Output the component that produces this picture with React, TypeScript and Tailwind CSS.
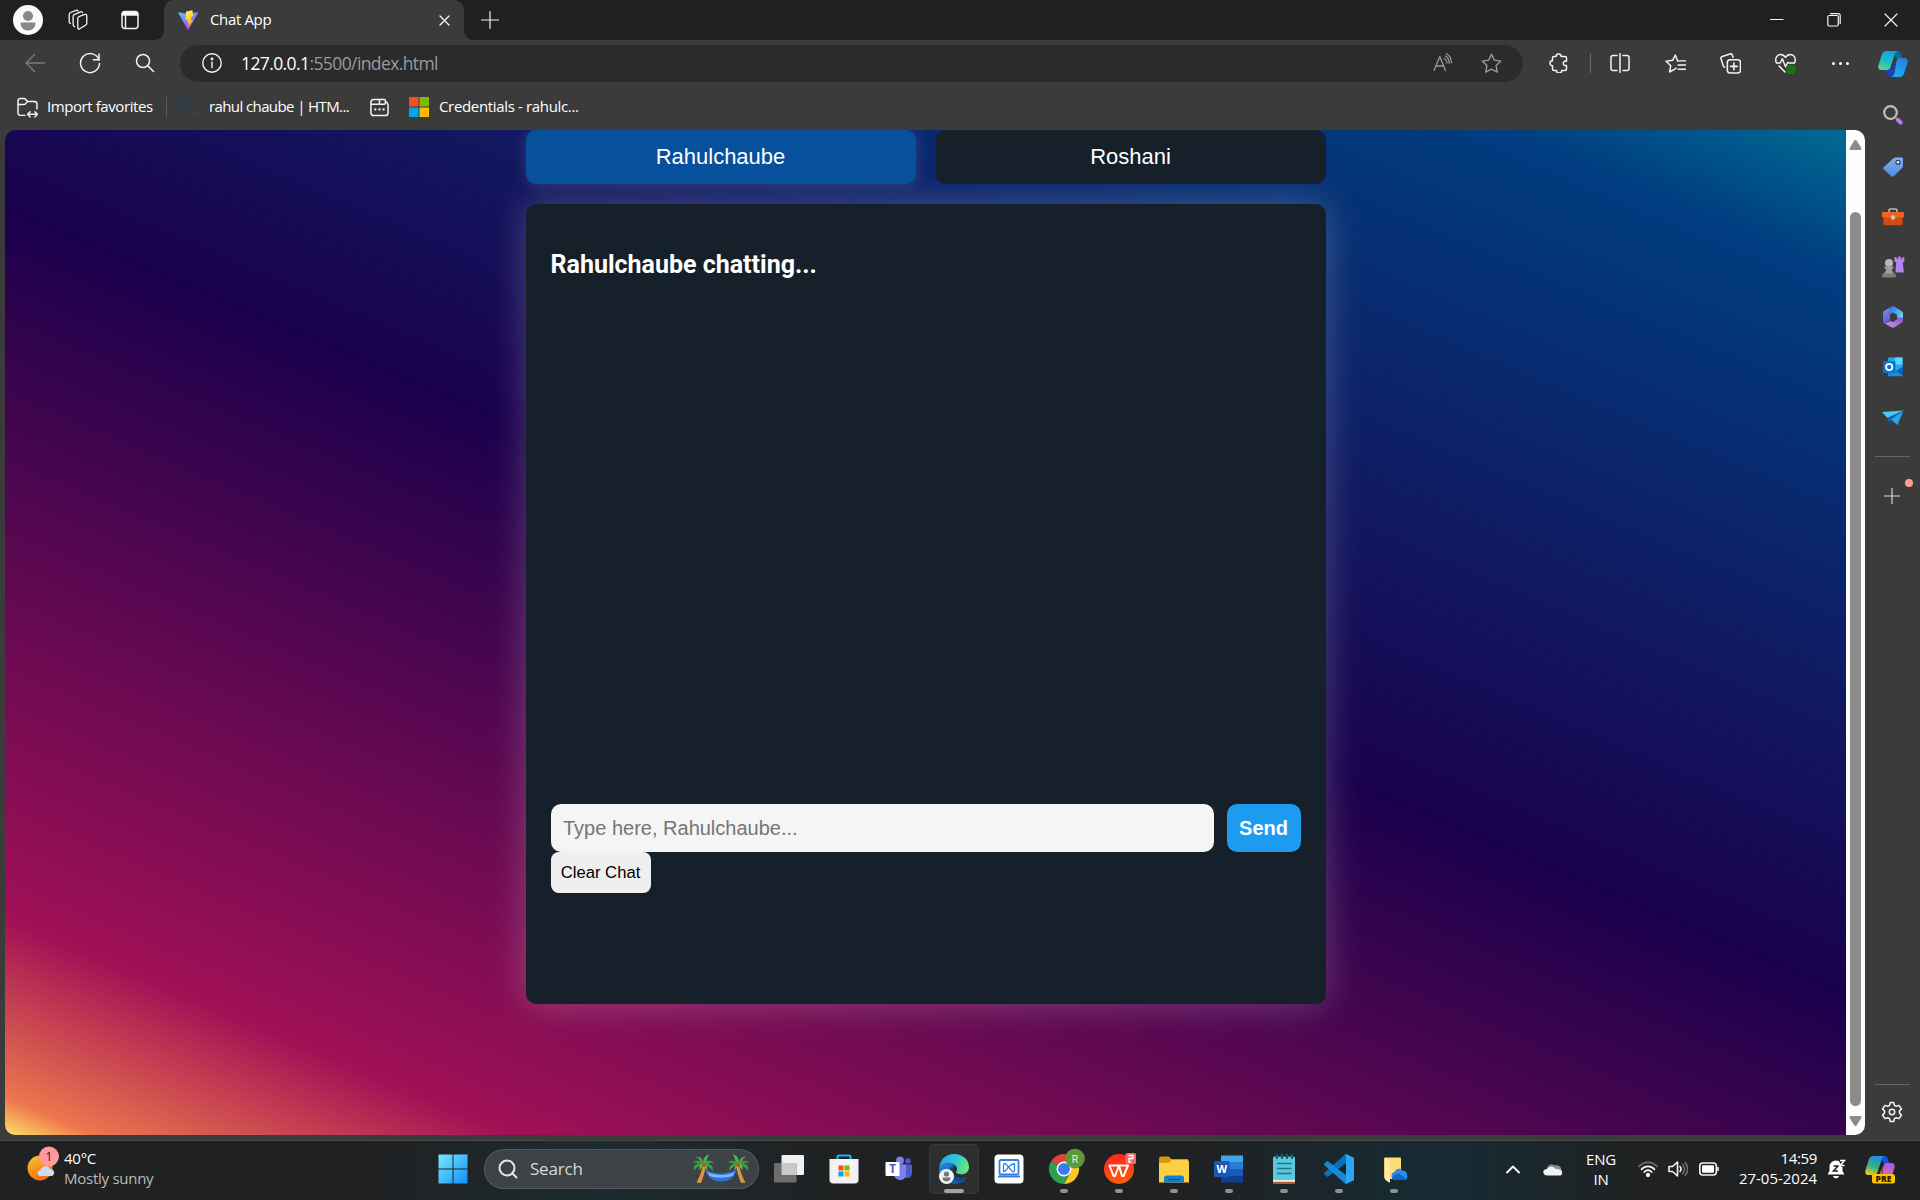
import type { ReactNode } from "react";
import clsx from "clsx";

type SlotProps = { className?: string; children?: ReactNode };

function Slot({ className, children }: SlotProps) {
  return (
    <div className={clsx("flex shrink-0 items-center justify-center", className)}>
      {children}
    </div>
  );
}

type IconProps = { size?: number; box?: number; color?: string; width?: number; children: ReactNode };

// Thin outline icon used all over the browser chrome
function Line({ size = 20, box = 20, color = "#f3f3f3", width = 1.3, children }: IconProps) {
  return (
    <svg
      width={size}
      height={size}
      viewBox={`0 0 ${box} ${box}`}
      fill="none"
      stroke={color}
      strokeWidth={width}
      strokeLinecap="round"
      strokeLinejoin="round"
    >
      {children}
    </svg>
  );
}

function Pic({ size = 30, box = 30, children }: IconProps) {
  return (
    <svg width={size} height={size} viewBox={`0 0 ${box} ${box}`} className="overflow-visible">
      {children}
    </svg>
  );
}

function CopilotLogo({ pre = false }: { pre?: boolean }) {
  return (
    <Pic>
      <defs>
        <linearGradient id={pre ? "cpA2" : "cpA1"} x1="0.6" y1="0" x2="0.2" y2="1">
          <stop offset="0" stopColor={pre ? "#1b8fe8" : "#0aa4e0"} />
          <stop offset="0.55" stopColor={pre ? "#35b07c" : "#24bcc2"} />
          <stop offset="1" stopColor={pre ? "#f0d022" : "#57d98c"} />
        </linearGradient>
        <linearGradient id={pre ? "cpB2" : "cpB1"} x1="0.7" y1="0" x2="0.3" y2="1">
          <stop offset="0" stopColor={pre ? "#a05cf0" : "#2a7de0"} />
          <stop offset="1" stopColor={pre ? "#ff6f7d" : "#13b5f5"} />
        </linearGradient>
      </defs>
      <path d="M13 2h6.500c2 0 2.800 1.300 3.300 3l1.200 4h-5z" fill={pre ? "#1c4fd8" : "#0a6f9f"} />
      <path d="M7 21h7l4-9-3 15.500h-2.500c-2 0-3-1.500-3.500-3z" fill={pre ? "#f2663c" : "#1b3fd0"} />
      <path d="M8.500 2H20c-2 .3-2.800 1.600-3.400 3.500L12.600 18c-.7 2-1.700 3-3.800 3H3.500C.8 21-.2 19 .4 16.500L3.800 5.500C4.600 3.200 6 2 8.500 2z" fill={`url(#${pre ? "cpA2" : "cpA1"})`} />
      <path d="M21 9h5.500c2.700 0 3.700 2 3.100 4.500l-3.400 10.800c-.8 2.400-2.200 3.700-4.700 3.700H13c2-.3 2.800-1.600 3.400-3.500l2-12C18.900 10 19.500 9 21 9z" fill={`url(#${pre ? "cpB2" : "cpB1"})`} />
      {pre && (
        <g>
          <rect x="7" y="20" width="23" height="9.500" rx="2.500" fill="#ffc400" />
          <text x="18.500" y="28" textAnchor="middle" fontSize="8.500" fontWeight="800" fontFamily="Open Sans, sans-serif" fill="#241c00">
            PRE
          </text>
        </g>
      )}
    </Pic>
  );
}

function MicrosoftLogo({ size = 20 }: { size?: number }) {
  return (
    <Pic size={size} box={20}>
      <rect width="9.500" height="9.500" fill="#f25022" />
      <rect x="10.500" width="9.500" height="9.500" fill="#7fba00" />
      <rect y="10.500" width="9.500" height="9.500" fill="#00a4ef" />
      <rect x="10.500" y="10.500" width="9.500" height="9.500" fill="#ffb900" />
    </Pic>
  );
}

function TitleBar() {
  return (
    <div className="flex h-10 shrink-0 items-center bg-[#202020]">
      <Slot className="w-14">
        <Pic size={30}>
          <circle cx="15" cy="15" r="15" fill="#fafafa" />
          <circle cx="15" cy="11" r="5" fill="#8a8684" />
          <path d="M7.500 17.500h15c0 5-3 8-7.500 8s-7.500-3-7.500-8z" fill="#8a8684" />
        </Pic>
      </Slot>
      <Slot className="w-11">
        <Line size={22} box={22}>
          <path d="M12.500 7.300l5.300-2c1-.3 2 .3 2 1.400v7.500c0 1-.5 1.700-1.400 2l-5.700 3.600c-1 .5-1.900 0-1.900-1.100V9.200c0-1 .6-1.600 1.700-1.900z" />
          <path d="M7.500 17.500c-.9-.2-1.400-.8-1.400-1.700V7.500c0-1 .6-1.700 1.600-2.100L13.500 2.800c1-.4 1.800 0 2 .9" />
          <path d="M3.500 14.500c-.9-.3-1.300-.9-1.300-1.700V5.600c0-1 .5-1.700 1.400-2.100L9 1.300c.9-.3 1.600-.1 2 .5" />
        </Line>
      </Slot>
      <Slot className="w-[60px]">
        <Line size={20} width={1.5}>
          <rect x="2" y="1.500" width="16" height="17" rx="3" />
          <path d="M2.500 5V4.500C2.500 3 3.300 2 4.700 2h10.600c1.400 0 2.200 1 2.200 2.500V5z" fill="#fff" />
          <path d="M5.500 6v12" />
        </Line>
      </Slot>
      <div className="h-10 w-1 shrink-0 self-end" />
      <div className="relative flex h-10 w-[300px] shrink-0 items-center rounded-t-[10px] bg-[#3b3b3b]">
        {/* Concave feet of the active tab */}
        <svg width="10" height="10" className="absolute bottom-0 -left-[10px]">
          <path d="M10 0v10H0C6 10 10 6 10 0z" fill="#3b3b3b" />
        </svg>
        <svg width="10" height="10" className="absolute -right-[10px] bottom-0">
          <path d="M0 0v10h10C4 10 0 6 0 0z" fill="#3b3b3b" />
        </svg>
        <Slot className="ml-3.5 w-5">
          <Pic size={20} box={20}>
            <defs>
              <linearGradient id="viteBody" x1="0" y1="0" x2="0.6" y2="1">
                <stop offset="0" stopColor="#41d1ff" />
                <stop offset="1" stopColor="#bd34fe" />
              </linearGradient>
              <linearGradient id="viteBolt" x1="0.4" y1="0" x2="0.6" y2="1">
                <stop offset="0" stopColor="#ffea83" />
                <stop offset="0.3" stopColor="#ffdd35" />
                <stop offset="1" stopColor="#ffa800" />
              </linearGradient>
            </defs>
            <path d="M0 2.300l8 1.300 11.800-1.300c.3 0 .5.300.3.600L10.400 19.700c-.2.300-.6.300-.8 0z" fill="url(#viteBody)" />
            <path d="M14.500.2L8 1.500l-.6 8.500 2.500-.5-.5 4 1.500-.4-.8 4.700L15 9.700l-2.300.4.900-3.600 1.500-.3z" fill="url(#viteBolt)" />
          </Pic>
        </Slot>
        <span className="ml-3 pb-0.5 text-[15px] tracking-[-0.35px] text-white">Chat App</span>
        <Slot className="mr-2.5 ml-auto w-5">
          <Line size={11} box={11} width={1.4}>
            <path d="M1 1l9 9M10 1l-9 9" />
          </Line>
        </Slot>
      </div>
      <Slot className="w-[52px]">
        <Line size={18} box={18} width={1.2}>
          <path d="M9 .5v17M.5 9h17" />
        </Line>
      </Slot>
      <Slot className="ml-auto w-[57px]">
        <Line size={14} box={14} width={1.2}>
          <path d="M.5 6.500h12.500" />
        </Line>
      </Slot>
      <Slot className="w-[57px]">
        <Line size={14} box={14} width={1.2}>
          <rect x=".8" y="2.500" width="10.500" height="10.500" rx="1.500" />
          <path d="M3.500.7h7.700c1.200 0 2 .8 2 2v7.800" />
        </Line>
      </Slot>
      <Slot className="w-[58px]">
        <Line size={14} box={14} width={1.2}>
          <path d="M1 1l12 12M13 1L1 13" />
        </Line>
      </Slot>
    </div>
  );
}

function Toolbar() {
  return (
    <div className="flex h-12 shrink-0 items-center pb-0.5">
      <Slot className="w-[62px] pl-2">
        <Line size={20} color="#7c7c7c" width={1.4}>
          <path d="M19.500 10H1M9.500 1.500L1 10l8.500 8.500" />
        </Line>
      </Slot>
      <Slot className="w-14">
        <Line size={22} box={22} width={1.5}>
          <path d="M20 8A9.500 9.500 0 1 0 20.500 11.500" />
          <path d="M20 2v5.700h-5.700" />
        </Line>
      </Slot>
      <Slot className="w-[54px]">
        <Line size={20} width={1.5}>
          <circle cx="8" cy="8" r="6.500" />
          <path d="M13 13l5.500 5.500" />
        </Line>
      </Slot>
      <div className="ml-2 flex h-[37px] w-[1343px] shrink-0 items-center rounded-full bg-[#2b2b2b]">
        <Slot className="ml-5 w-6">
          <Line size={20} width={1.4}>
            <circle cx="10" cy="10" r="9.200" />
            <path d="M10 9v5.500" />
            <circle cx="10" cy="5.900" r=".7" fill="#f3f3f3" />
          </Line>
        </Slot>
        <span className="ml-[17px] text-[17.500px] tracking-[-0.600px] text-white">
          127.0.0.1<span className="text-[#9a9a9a]">:5500/index.html</span>
        </span>
        <Slot className="ml-auto w-[49px]">
          <Line size={20} color="#9a9a9a">
            <path d="M1 17.500L6.800 3.500l5.700 14M3 13h7.500" />
            <path d="M11.500 5.500c1.700 1 2.400 2.600 2.400 4.500M12.500 3c2.600 1.500 3.700 3.800 3.600 7M13.500.8c3.500 2 5 5 4.800 9" />
          </Line>
        </Slot>
        <Slot className="mr-[7px] w-[49px]">
          <Line size={21} color="#9a9a9a">
            <path d="M10 1.200l2.700 5.600 6.200.9-4.500 4.300 1.100 6.200L10 15.300l-5.500 2.900 1.100-6.200L1.100 7.700l6.200-.9z" />
          </Line>
        </Slot>
      </div>
      <Slot className="w-[72px]">
        <Line size={20} width={1.5}>
          <path d="M7 3.500a2.600 2.600 0 0 1 5.200 0H16c.9 0 1.500.6 1.500 1.500v3.200h-1a2.200 2.200 0 0 0 0 4.400h1V16c0 .9-.6 1.500-1.500 1.500h-3.300a2.600 2.600 0 0 1-5.200 0H5c-.9 0-1.500-.6-1.500-1.500v-3.200a2.500 2.500 0 0 1 0-5V5c0-.9.6-1.500 1.500-1.500z" />
        </Line>
      </Slot>
      <div className="-ml-[5px] h-5 w-px shrink-0 bg-[#6a6a6a]" />
      <Slot className="ml-0.5 w-[54px]">
        <Line size={20} width={1.5}>
          <path d="M7 2.500H3C1.800 2.500 1 3.300 1 4.500v11c0 1.200.8 2 2 2h4M13 2.500h4c1.200 0 2 .8 2 2v11c0 1.200-.8 2-2 2h-4M10 .7v18.600" />
        </Line>
      </Slot>
      <Slot className="w-[56px]">
        <Line size={21} width={1.4}>
          <path d="M12 7.500L9.800 2 7.300 7 1 7.800l4.500 4.300-1.200 6 4.700-2.600 1.500-1" />
          <path d="M12 7.500h7.500M12.500 11.500h7M12.500 15.500h7" />
        </Line>
      </Slot>
      <Slot className="w-[55px]">
        <Line size={21} width={1.5}>
          <rect x="7" y="6.500" width="12.500" height="12.500" rx="2.500" />
          <path d="M13.250 9.500v6.500M10 12.750h6.500" />
          <path d="M4.500 13.500c-.8-.2-1.300-.8-1.500-1.500L1 5.600c-.3-1 .2-2 1.200-2.300L9.500 1c1-.3 2 .2 2.300 1.200l.6 1.800" />
        </Line>
      </Slot>
      <Slot className="w-[55px]">
        <Line size={21} width={1.4}>
          <path d="M1.200 9C-.2 5.500 1.500 1.800 5 1.500c2-.1 3.700.8 5 2.700 1.300-1.900 3-2.800 5-2.700 3.500.3 5.200 4 3.800 7.500" />
          <path d="M1.500 9.500H5l2-4 3 7.500 2.200-4 1.300.5h5M4 12.500l5.500 5.500" />
          <circle cx="15.300" cy="15.800" r="4" fill="#107c10" stroke="#107c10" />
          <path d="M13.500 16l1.300 1.200 2.200-2.500" stroke="#2b5b2b" strokeWidth="1" />
        </Line>
      </Slot>
      <Slot className="w-[55px] gap-[4px]">
        <span className="size-[3px] rounded-full bg-white" />
        <span className="size-[3px] rounded-full bg-white" />
        <span className="size-[3px] rounded-full bg-white" />
      </Slot>
    </div>
  );
}

function BookmarksBar() {
  return (
    <div className="flex h-[42px] shrink-0 items-center pb-1 text-[15px] text-white">
      <Slot className="ml-[17px] w-[21px]">
        <Line size={21} width={1.4}>
          <path d="M7.500 17.500H3.500C2 17.500 1 16.600 1 15.200V3.600C1 2.300 2 1.500 3.300 1.500h3.200c.8 0 1.300.3 1.800.9L10 4.200h6.500c1.500 0 2.500.9 2.500 2.300v5" />
          <path d="M1 7.200h5.500c.9 0 1.300-.3 1.800-.9L10 4.200M10.500 16.500h8.700M12.500 14l-2.500 2.500 2.500 2.500M17 14l2.500 2.500L17 19" />
        </Line>
      </Slot>
      <span className="ml-[9px] w-[106px] pb-px whitespace-nowrap tracking-[-0.42px]">Import favorites</span>
      <div className="ml-[13px] h-5 w-px bg-[#5c5c5c]" />
      <Slot className="ml-3 w-5">
        <Pic size={20} box={20}>
          <path d="M1 1h11M1 1v16h11V1M3 4h7" stroke="#20425a" fill="none" />
          <text x="3" y="14" fontSize="10" fontFamily="Open Sans, sans-serif" fill="#1d4b68">c</text>
          <path d="M14 17h2m2 0h1.500" stroke="#1d5c86" />
        </Pic>
      </Slot>
      <span className="ml-[10px] w-[142px] pb-px whitespace-nowrap tracking-[-0.600px]">rahul chaube | HTM...</span>
      <Slot className="ml-[18px] w-5">
        <Line size={19} width={1.6}>
          <path d="M9.500 1.500H4C2.300 1.500 1 2.700 1 4.500v11C1 17.300 2.300 18.500 4 18.500h12c1.700 0 3-1.200 3-3v-8c0-1.500-.8-2.500-2-3.500" />
          <path d="M1.500 6.500h7c1 0 1.500-.4 1.500-1.300V1.500h5c.8 0 1.200.4 1.200 1.200v2.600c0 .8-.4 1.200-1.200 1.200h-5" />
          <path d="M5.500 12h.2M9.900 12h.2M14.200 12h.2" strokeWidth="2.200" />
        </Line>
      </Slot>
      <Slot className="ml-5 w-5">
        <MicrosoftLogo />
      </Slot>
      <span className="ml-[10px] pb-px whitespace-nowrap tracking-[-0.340px]">Credentials - rahulc...</span>
    </div>
  );
}

function ChatPage() {
  return (
    <div className="flex w-[1841px] flex-col items-center overflow-hidden bg-[linear-gradient(23.1deg,#ffe066_0px,#ed764d_35px,#a01056_201px,#1b004c_847px,#003d80_1510px,#006a94_1644px)] font-['Liberation_Sans',Arial,sans-serif]">
      {/* Person selector sits above the glow of the chat card */}
      <div className="relative z-10 flex w-[800px] gap-5">
        <button className="h-[54px] flex-1 rounded-[10px] bg-[#07519c] pb-0.5 text-[22px] text-white shadow-[0_0_16px_rgba(255,255,255,0.15)]">
          Rahulchaube
        </button>
        <button className="h-[54px] flex-1 rounded-[10px] bg-[#16202a] pb-0.5 text-[22px] text-white">
          Roshani
        </button>
      </div>
      <div className="mt-5 flex h-[800px] w-[800px] flex-col rounded-[10px] bg-[#16202a] px-[25px] shadow-[0_0_38px_rgba(255,255,255,0.24)]">
        <h2 className="mt-[46px] h-[30px] font-['Roboto',sans-serif] text-[25px] leading-[30px] font-bold text-white">
          Rahulchaube chatting...
        </h2>
        <div className="mt-[524px] flex gap-[13px]">
          <input
            className="h-12 w-[663px] rounded-[10px] bg-[#f5f5f5] px-[12.500px] text-[20px] placeholder:text-[#757575]"
            placeholder="Type here, Rahulchaube..."
          />
          <button className="h-12 flex-1 rounded-[10px] bg-[#1d9bf0] text-[20px] font-bold text-white">
            Send
          </button>
        </div>
        <button className="h-[41px] w-[100px] rounded-[8px] bg-[#efefef] text-[16.670px] whitespace-nowrap text-black">
          Clear Chat
        </button>
      </div>
    </div>
  );
}

function Scrollbar() {
  return (
    <div className="flex w-[19px] flex-col items-center bg-[#fdfdfd]">
      <svg width="13" height="10" className="mt-2.5">
        <path d="M6.500 0c.6 0 1 .3 1.300.8L12.300 8c.4.800 0 2-1 2H1.700c-1 0-1.400-1.200-1-2L5.200.8C5.500.3 5.900 0 6.500 0z" fill="#8b8b8b" />
      </svg>
      <div className="mt-[62px] h-[894px] w-[11px] rounded-full bg-[#8b8b8b]" />
      <svg width="13" height="10" className="mt-2.5">
        <path d="M6.500 10c.6 0 1-.3 1.300-.8L12.300 2c.4-.8 0-2-1-2H1.700C.7 0 .3 1.200.7 2l4.500 7.200c.3.500.7.800 1.300.800z" fill="#8b8b8b" />
      </svg>
    </div>
  );
}

const sidebarIcons = [
  <Pic size={20} box={20}>
    <circle cx="7.500" cy="7.500" r="6.300" fill="none" stroke="#bdbdbd" strokeWidth="2.200" />
    <path d="M12.500 12.500l1.800 1.800" stroke="#8b8b8b" strokeWidth="2" />
    <path d="M15 15l2.700 2.700" stroke="#b57cf0" strokeWidth="4" strokeLinecap="round" />
  </Pic>,
  <Pic size={20} box={20}>
    <defs>
      <linearGradient id="tagFill" x1="0" y1="0" x2="0" y2="1">
        <stop offset="0" stopColor="#84b0f5" />
        <stop offset="1" stopColor="#4f86e0" />
      </linearGradient>
    </defs>
    <path d="M12.500.5h6c.9 0 1.500.6 1.500 1.500v7c0 .6-.2 1.200-.7 1.700l-8.500 8.500c-.8.800-1.800.8-2.600 0L.9 12.500c-.8-.8-.8-1.900 0-2.600L10.500 1.200c.6-.5 1.200-.7 2-.7z" fill="url(#tagFill)" />
    <circle cx="15" cy="5.300" r="2.600" fill="#2d3e5c" />
    <circle cx="15" cy="5.300" r="1.300" fill="#fff" />
  </Pic>,
  <Pic size={22} box={22}>
    <path d="M7 6V4.500C7 3.500 7.500 3 8.500 3h5c1 0 1.500.5 1.500 1.500V6" stroke="#b9b9b9" strokeWidth="1.600" fill="none" />
    <path d="M1.500 11h19v7c0 .8-.5 1.200-1.200 1.200H2.700c-.7 0-1.200-.4-1.200-1.200z" fill="#d9480f" />
    <path d="M1 6h20c.5 0 1 .4 1 1v3c0 1-.5 1.500-1.500 1.500h-19C.5 11.500 0 11 0 10V7c0-.6.500-1 1-1z" fill="#f0641e" />
    <circle cx="11" cy="11.500" r="2.300" fill="#c4c4c4" />
  </Pic>,
  <Pic size={22} box={22}>
    <path d="M12.500 1h2v1.500h1.700V.5h2.600v2h1.700V1h1.800v4.500l-1.500 1 .9 8.500c.5.500.3 1.500-.7 1.500h-7.500l.6-10-1.600-1z" fill="#b583f0" />
    <circle cx="7" cy="7" r="4" fill="#b8b5b3" />
    <path d="M2.500 10.500h9v2.200H10c.2 3 1 4 2.500 5.300h-11C3 16.700 3.800 15.700 4 12.700H2.500z" fill="#a19e9c" />
    <rect y="17.500" width="14" height="4" rx="1.500" fill="#7e7b79" />
  </Pic>,
  <Pic size={22} box={22}>
    <defs>
      <linearGradient id="mA" x1="0" y1="0" x2="0.3" y2="1">
        <stop offset="0" stopColor="#9a8cf0" />
        <stop offset="1" stopColor="#4a5fd8" />
      </linearGradient>
      <linearGradient id="mB" x1="0" y1="0" x2="1" y2="0.6">
        <stop offset="0" stopColor="#2d6fe0" />
        <stop offset="1" stopColor="#5fd2f7" />
      </linearGradient>
      <linearGradient id="mC" x1="1" y1="0" x2="0" y2="0.6">
        <stop offset="0" stopColor="#7d52c8" />
        <stop offset="1" stopColor="#c890ee" />
      </linearGradient>
    </defs>
    <path d="M10.500.2L2 5C1.300 5.500 1 6 1 7v8c0 1.200.5 2 1.500 2.700L8 15V8.500l-.5-3z" fill="url(#mA)" />
    <path d="M10.500.2L7.500 3v5.500L11 6.500l4 2.300v3.700l6 2V7.500c0-1-.4-1.700-1.200-2.200L12.300.6C11.700.2 11.100.1 10.500.200z" fill="url(#mB)" />
    <path d="M21 12v2.500c0 1-.4 1.800-1.300 2.300l-7.200 4.400c-1 .6-2 .6-3 0l-7-3.900C5 17.700 7 16 8 15l3 1 4-2.500V11z" fill="url(#mC)" />
  </Pic>,
  <Pic size={20} box={20}>
    <rect x="5" y=".5" width="14.500" height="18.500" rx="1.200" fill="#28a8ea" />
    <rect x="12" y=".5" width="7.500" height="7" fill="#50d9ff" />
    <path d="M5 9.500l7.500 4.500 7.500-5v9c0 .8-.5 1.200-1.200 1.200H5z" fill="#1490df" />
    <path d="M13 14l7 5V10z" fill="#0a63b0" />
    <rect y="4" width="12.500" height="12" rx="1.200" fill="#0a74cf" />
    <circle cx="6.200" cy="10" r="3.100" fill="none" stroke="#fff" strokeWidth="1.800" />
  </Pic>,
  <Pic size={22} box={22}>
    <path d="M0 6l21.500-1.500L5.500 12z" fill="#4cc8f5" />
    <path d="M21.500 4.500L8 13l7.500 6z" fill="#29a3ea" />
    <path d="M5.500 12l16-7.500L9 13.500 7 17.500z" fill="#0e67b8" />
    <path d="M7 17.500l2-4 2.200 2z" fill="#1a4f8a" />
  </Pic>,
];

function Sidebar() {
  return (
    <div className="flex w-[55px] flex-col items-center">
      <Slot className="h-[50px] w-[55px] pb-0.5">
        <CopilotLogo />
      </Slot>
      {sidebarIcons.map((icon, i) => (
        <Slot key={i} className={clsx("h-[50px] w-[55px]", i > 0 && "pt-[3px]")}>
          {icon}
        </Slot>
      ))}
      <div className="mt-4 h-px w-[35px] bg-[#666]" />
      <div className="relative mt-[29px] flex h-5 w-[55px] items-center justify-center pr-0.5">
        <Line size={16} box={16} color="#d8d8d8" width={1.2}>
          <path d="M8 .5v15M.5 8h15" />
        </Line>
        <span className="absolute -top-[7px] right-[7px] size-2 rounded-full bg-[#ff9d96]" />
      </div>
      <div className="mt-auto h-px w-[35px] bg-[#666]" />
      <Slot className="mb-[5px] h-[50px] w-[55px] pt-1 pr-0.5">
        <Line size={22} box={22} width={1.5}>
          <circle cx="11" cy="11" r="2.700" />
          <path d="M9.300 1.500h3.400l.7 2.800 1.800 1 2.800-.9 2.500 3.500-2 2v2.200l2 2-2.500 3.500-2.800-.9-1.800 1-.7 2.800H9.300l-.7-2.800-1.800-1-2.800.9-2.500-3.500 2-2V9.900l-2-2L4 4.400l2.800.9 1.800-1z" />
        </Line>
      </Slot>
    </div>
  );
}

type TaskApp = { name: string; icon: ReactNode; running?: boolean; active?: boolean };

const taskApps: TaskApp[] = [
  {
    name: "Task view",
    icon: (
      <Pic>
        <rect x="7.500" y="1" width="22.500" height="20" rx="1" fill="#f0f0f0" />
        <rect x="0" y="9" width="22.500" height="19.500" rx="1" fill="#6d6d6d" />
        <rect x="7.500" y="9" width="15" height="12" fill="#c9c9c9" />
      </Pic>
    ),
  },
  {
    name: "Store",
    icon: (
      <Pic>
        <path d="M8.500 6V3c0-1 .5-1.500 1.500-1.500h10c1 0 1.500.500 1.500 1.500v3" fill="none" stroke="#19b5f1" strokeWidth="2" />
        <path d="M.5 5h29v21c0 2-1.500 3.500-3.500 3.500H4C2 29.500.5 28 .5 26z" fill="#f3f3f3" />
        <rect x="9.500" y="11.500" width="5" height="5" fill="#f25022" />
        <rect x="15.500" y="11.500" width="5" height="5" fill="#7fba00" />
        <rect x="9.500" y="17.500" width="5" height="5" fill="#00a4ef" />
        <rect x="15.500" y="17.500" width="5" height="5" fill="#ffb900" />
      </Pic>
    ),
  },
  {
    name: "Teams",
    icon: (
      <Pic>
        <circle cx="24" cy="7" r="2.700" fill="#5059c9" />
        <path d="M18 10.500h10v8.500c0 3-1.800 5-4.500 5S18 22 18 19z" fill="#5059c9" />
        <circle cx="16" cy="6.500" r="3.900" fill="#7b83eb" />
        <path d="M10 10.500h12V20c0 3.500-2 6-5.500 6S10 23.500 10 20z" fill="#7b83eb" />
        <rect x="1.500" y="8" width="14" height="14" rx="1" fill="#fff" />
        <text x="8.500" y="19" textAnchor="middle" fontSize="11.500" fontWeight="700" fontFamily="Open Sans, sans-serif" fill="#4b53bc">T</text>
      </Pic>
    ),
  },
  {
    name: "Edge",
    running: true,
    active: true,
    icon: (
      <Pic>
        <defs>
          <linearGradient id="edgeTop" x1="0" y1="0.3" x2="1" y2="0.5">
            <stop offset="0" stopColor="#2aa5e8" />
            <stop offset="0.5" stopColor="#2fc2df" />
            <stop offset="1" stopColor="#66eb6e" />
          </linearGradient>
          <linearGradient id="edgeBot" x1="0" y1="0" x2="1" y2="1">
            <stop offset="0" stopColor="#1b8fe0" />
            <stop offset="1" stopColor="#0f4a90" />
          </linearGradient>
        </defs>
        <path d="M.2 14C1 5.500 7 0 15 0c8.500 0 15 5.500 15 13 0 4.500-3 7.300-7.500 7.300-3.800 0-5.700-1.300-5.400-2.300.3-.8 1-1.300 1-3C18.100 12 15 9 10 9 5 9 1.500 11 .2 14z" fill="url(#edgeTop)" />
        <path d="M.1 14.500C1 11 5 8.500 10 8.700c3 .2 5 1.200 6.500 2.800-4 0-6.500 3-6.500 6.500 0 5.500 5 9 11 9 3 0 5-.7 6.700-1.700C25 28.500 20.500 30 15.500 30 6 30-.5 23 .1 14.500z" fill="url(#edgeBot)" />
        <path d="M10 18c0 5.500 5 9 11 9 3 0 5.500-1 6.500-2.700.5-1-.3-1.500-1.200-1-4.300 2.200-10.500.7-12.300-3.300-1.500-3 0-6.500 2.500-8.500C13 11.500 10 14.500 10 18z" fill="#124d8c" />
        <circle cx="7.500" cy="22.500" r="7.500" fill="#f5f5f5" />
        <circle cx="7.500" cy="20" r="2.600" fill="#777" />
        <path d="M3.500 23.500h8c0 2.500-1.600 4-4 4s-4-1.500-4-4z" fill="#777" />
      </Pic>
    ),
  },
  {
    name: "Device",
    icon: (
      <Pic>
        <rect x=".5" y=".5" width="29" height="29" rx="4" fill="#fff" />
        <rect x="5.500" y="6" width="19" height="14.500" rx="1.500" fill="#fff" stroke="#2f7fe5" strokeWidth="1.800" />
        <path d="M9.500 17.500v-6.500c0-1.500 1.500-2 2.500-.8l6 7c1 1.200 2.500.7 2.500-.8V9.500M9.500 17.500c3 0 3-3 5.500-5s3-2.500 5.500-3" fill="none" stroke="#2f7fe5" strokeWidth="1.300" />
        <path d="M4 22.500h22" stroke="#2f7fe5" strokeWidth="2" />
      </Pic>
    ),
  },
  {
    name: "Chrome",
    running: true,
    icon: (
      <Pic>
        <path d="M15 15L2 7.500A15 15 0 0 1 28 7.500z" fill="#e04336" />
        <path d="M15 15l-13-7.500A15 15 0 0 0 15 30l6.500-11.200z" fill="#2f9e4f" />
        <path d="M15 7.500h13A15 15 0 0 1 15 30l6.500-11.200z" fill="#fcc627" />
        <circle cx="15" cy="15" r="7.500" fill="#fff" />
        <circle cx="15" cy="15" r="6" fill="#3b7ded" />
        <circle cx="26" cy="4.500" r="9.800" fill="#5f9a38" />
        <text x="26" y="8.500" textAnchor="middle" fontSize="11" fontFamily="Open Sans, sans-serif" fill="#e9f3e0">R</text>
      </Pic>
    ),
  },
  {
    name: "WPS",
    running: true,
    icon: (
      <Pic>
        <defs>
          <linearGradient id="wps" x1="0" y1="0" x2="0.2" y2="1">
            <stop offset="0" stopColor="#ff1f1f" />
            <stop offset="1" stopColor="#ff5a0a" />
          </linearGradient>
        </defs>
        <circle cx="15" cy="15" r="15" fill="url(#wps)" />
        <path d="M13 11.500H5.500l4 10.500h1.500l4-10.500 3 10.500h1.500l4.500-10.500H13" fill="none" stroke="#fff" strokeWidth="2" strokeLinejoin="round" />
        <rect x="21.500" y="-1" width="10.500" height="11" rx="1.500" fill="#f4696b" />
        <path d="M24.500 1.500h4.500v3h-4v3.500h2" fill="none" stroke="#fff" strokeWidth="1.300" />
      </Pic>
    ),
  },
  {
    name: "Explorer",
    running: true,
    icon: (
      <Pic>
        <path d="M0 5c0-1.500 1-2.500 2.500-2.500h7L12.500 5H29v4H0z" fill="#d99a08" />
        <path d="M0 9h9.500l3-3H28c1.200 0 2 .8 2 2v20.500H0z" fill="#ffcf45" />
        <path d="M5 28.500V24c0-1.500 1-2.500 2.500-2.500h15c1.500 0 2.500 1 2.500 2.500v4.500z" fill="#1180d3" />
        <path d="M9 25.500h12" stroke="#0a5596" strokeWidth="1.200" />
      </Pic>
    ),
  },
  {
    name: "Word",
    running: true,
    icon: (
      <Pic>
        <rect x="7" y="1.500" width="22" height="7" fill="#41a5ee" />
        <rect x="7" y="8" width="22" height="7" fill="#2b7cd3" />
        <rect x="7" y="15" width="22" height="7" fill="#185abd" />
        <rect x="7" y="22" width="22" height="6.500" fill="#103f91" />
        <rect x="0" y="7" width="15.500" height="16" rx="1" fill="#1c56b8" />
        <text x="7.700" y="19" textAnchor="middle" fontSize="11" fontWeight="700" fontFamily="Open Sans, sans-serif" fill="#fff">W</text>
      </Pic>
    ),
  },
  {
    name: "Notepad",
    running: true,
    icon: (
      <Pic>
        <rect x="4" y="27" width="22" height="3" rx="1" fill="#b0602a" />
        <rect x="4" y="25" width="22" height="2.800" fill="#eee" />
        <rect x="4" y="2.500" width="22" height="23.500" rx="1.500" fill="#5cc8dd" />
        <path d="M8 .8v3M13 .8v3M18 .8v3M23 .8v3" stroke="#0d5c70" strokeWidth="2.400" strokeLinecap="round" />
        <path d="M8 9.500h14.500M8 14.500h14.500M8 19.500h14.500" stroke="#1b7688" strokeWidth="1.600" />
      </Pic>
    ),
  },
  {
    name: "Code",
    running: true,
    icon: (
      <Pic>
        <path d="M22 0v9L4.200 22.500c-.5.400-1 .4-1.500 0L.5 20.500c-.6-.5-.6-1.300 0-1.800L21 .5z" fill="#0b72b8" />
        <path d="M22 30v-9L4.200 7.500c-.5-.4-1-.4-1.500 0L.5 9.500c-.6.500-.6 1.300 0 1.800L21 29.500z" fill="#158ad6" />
        <path d="M22 0l7 3.200c.7.300 1 .8 1 1.500v20.600c0 .7-.3 1.200-1 1.500L22 30c-.5.200-1 0-1.300-.3.500.3 1.300 0 1.300-.7V1c0-.7-.8-1-1.300-.7C21 0 21.500-.2 22 0z" fill="#2aa7f2" />
      </Pic>
    ),
  },
  {
    name: "OneDrive folder",
    running: true,
    icon: (
      <Pic>
        <path d="M6 3.500h15c.6 0 1 .4 1 1V25H10z" fill="#ffdc7a" />
        <path d="M5 3.500l6 4v21l-5-3.500c-.6-.4-1-1-1-1.700z" fill="#f5c95c" />
        <path d="M6 3.500l5 4V28l-1 .5-4-3z" fill="#ffe9ad" />
        <path d="M16 26a4.300 4.300 0 0 1-.5-8.300c1.300-3.500 6-4.200 8-1 3.500-.2 5 2.300 4.500 5 1 2 0 4.300-2.500 4.300z" fill="#2a90e8" />
        <path d="M13 24c2-3 5-4.500 7-4.500l7.500 5c-.5 1-1.500 1.500-3 1.500H16c-1.500 0-2.500-.8-3-2z" fill="#1267c2" />
      </Pic>
    ),
  },
];

function TaskButton({ app }: { app: TaskApp }) {
  return (
    <div className="flex w-[55px] shrink-0 justify-center">
      <div
        className={clsx(
          "relative flex h-[50px] w-[50px] items-center justify-center rounded-[5px]",
          app.active && "bg-white/6 ring-1 ring-white/5 ring-inset"
        )}
        title={app.name}
      >
        {app.icon}
        {app.running && (
          <span
            className={clsx(
              "absolute bottom-[1px] h-1 rounded-full",
              app.active ? "w-5 bg-[#a5a49f]" : "w-2 bg-[#8e9193]"
            )}
          />
        )}
      </div>
    </div>
  );
}

function Palm({ x, flip }: { x: number; flip?: boolean }) {
  return (
    <g transform={flip ? `translate(${x} 0) scale(-1 1)` : `translate(${x} 0)`}>
      <path d="M13 12c1 5-1.500 11-4 18l-4.500-.5C7.500 24 10.500 17 10.500 12z" fill="#d9963f" />
      <path d="M11 11C8 7 3 6.500 0 10c3-1 5-.2 6 1-3.500 0-5 3-4 7 2-4 5.500-5 9-5.500z" fill="#3c9a45" />
      <path d="M11 11c0-5-3-8-7.500-7C6 4.500 7.500 6 8 8zM11 11c0-5 2-9.500 6.500-9.500C15.500 3.500 15 6 14.500 8z" fill="#54b04c" />
      <path d="M11 11c3-4 8-4.500 11.500-1-3-.5-5.500 0-6.500 1 3.500.5 5.500 3 4.500 7-2-4-5.500-5-9.500-5.500z" fill="#3fa04a" />
      <path d="M11 10c-3 1.500-4 4-3.500 7 1.500-1.500 3-3 3.500-7zM11 10c3 1.500 4.500 4 4.500 7-2-1.500-4-3-4.500-7z" fill="#6cc04f" />
      <circle cx="12" cy="12" r="1.900" fill="#b8521c" />
    </g>
  );
}

function Taskbar() {
  return (
    <div className="flex h-[60px] shrink-0 items-center border-t border-[#484848] bg-[#202122] bg-[linear-gradient(90deg,transparent_360px,#1c2b30_600px,transparent_850px,transparent_1180px,#172a31_1400px,#172a31_1470px,transparent_1640px)] pb-[3px] text-[15px] text-white">
      {/* Weather */}
      <div className="flex w-[425px] items-center pl-[27px]">
        <Pic size={32} box={32}>
          <defs>
            <linearGradient id="sun" x1="0.2" y1="0" x2="0.6" y2="1">
              <stop offset="0" stopColor="#fbc02d" />
              <stop offset="1" stopColor="#f26b0f" />
            </linearGradient>
          </defs>
          <circle cx="13" cy="15" r="12.500" fill="url(#sun)" />
          <path d="M14 23c-4.500 0-4.500-5.500-.5-6 1.500-4.500 8-5 9.500-1 4.500-.5 6 6 1.500 7z" fill="#c9ddfa" />
          <circle cx="22" cy="3.500" r="10" fill="#ff98a0" />
          <text x="22" y="8" textAnchor="middle" fontSize="12" fontFamily="Open Sans, sans-serif" fill="#1c1c1c">1</text>
        </Pic>
        <div className="ml-[5px] pb-0.5 leading-5 tracking-[-0.26px]">
          <div>40°C</div>
          <div className="text-[#bdbdbd]">Mostly sunny</div>
        </div>
      </div>
      <Slot className="w-[55px]">
        <Pic>
          <defs>
            <linearGradient id="win" x1="0" y1="0" x2="1" y2="1">
              <stop offset="0" stopColor="#7be9ff" />
              <stop offset="1" stopColor="#0f8ff5" />
            </linearGradient>
          </defs>
          <path d="M.5.500h14v14H.5zM15.500.500h14v14h-14zM.5 15.500h14v14H.5zM15.500 15.500h14v14h-14z" fill="url(#win)" />
        </Pic>
      </Slot>
      <div className="ml-1 flex h-10 w-[275px] items-center rounded-full bg-[#3c4246] ring-1 ring-[#55585b] ring-inset">
        <Slot className="ml-[14px] w-5">
          <Line size={20} color="#e6e6e6" width={2}>
            <circle cx="9" cy="9" r="7.500" />
            <path d="M14.500 14.500l4 4" />
          </Line>
        </Slot>
        <span className="ml-[12px] text-[17px] tracking-[-0.2px] text-[#d6d8d9]">Search</span>
        <svg width="58" height="32" viewBox="0 0 58 32" className="mr-[9px] ml-auto">
          <path d="M12 15c8 7 26 7 34 0l-5 9c-5 6-19 6-24 0z" fill="#2f6fdc" />
          <path d="M15 19c8 4 20 4 28 0l-2 3.500c-6 3-18 3-24 0z" fill="#7ab9f2" />
          <Palm x={0} />
          <Palm x={58} flip />
        </svg>
      </div>
      <div className="ml-0.5 flex">
        {taskApps.map((app) => (
          <TaskButton key={app.name} app={app} />
        ))}
      </div>
      {/* System tray */}
      <Slot className="ml-auto w-10">
        <Line size={14} box={14} width={2}>
          <path d="M1 10.500L7 4.500l6 6" />
        </Line>
      </Slot>
      <Slot className="w-10">
        <Pic size={20} box={20}>
          <path d="M4 12c-1-5 4-8 8-5.500 4-1 7 2 6.500 6z" fill="#8d8d8d" />
          <path d="M4.500 16.500C-1 16.500-1 10 4 10c2-3 7-3 9 .3 5-1.300 8.500 4.500 4.500 6.200z" fill="#f2f2f2" />
        </Pic>
      </Slot>
      <div className="w-14 pb-px text-center leading-5 tracking-[-0.2px]">
        <div>ENG</div>
        <div>IN</div>
      </div>
      <Slot className="ml-1 w-[30px]">
        <Line size={20} width={1.7}>
          <path d="M1 7.500C6 2 14 2 19 7.500" stroke="#6c6c6c" />
          <path d="M3.500 10.300c3.700-4 9.300-4 13 0M6.200 13c2.200-2.400 5.400-2.400 7.600 0" />
          <circle cx="10" cy="16" r="1.300" fill="#fff" />
        </Line>
      </Slot>
      <Slot className="w-[30px]">
        <Line size={20} width={1.6}>
          <path d="M1 7.500h3.500L9.500 3v14l-5-4.500H1z" />
          <path d="M12 7.500c1.300 1.500 1.300 3.500 0 5" />
          <path d="M14.500 5.500c2.300 2.700 2.300 6.300 0 9M17 3.500c3.300 4 3.300 9 0 13" stroke="#6c6c6c" />
        </Line>
      </Slot>
      <Slot className="w-[32px]">
        <Line size={20} width={1.6}>
          <rect x="0.800" y="4" width="16.500" height="12" rx="3" />
          <rect x="3" y="6.200" width="12" height="7.600" rx="1" fill="#fff" stroke="none" />
          <path d="M19 8.500v3" />
        </Line>
      </Slot>
      <div className="w-[92px] pb-0.5 text-right leading-5 tracking-[-0.020px] whitespace-nowrap">
        <div className="tracking-[-0.35px]">14:59</div>
        <div>27-05-2024</div>
      </div>
      <Slot className="ml-[8px] w-6">
        <Pic size={20} box={20}>
          <path d="M9 1.500c4 0 6.500 3 6.500 6.500v4l2 3.500H.5l2-3.500V8C2.500 4.500 5 1.500 9 1.500zM6 17h6c-.4 1.500-1.500 2.300-3 2.300S6.400 18.500 6 17z" fill="#fff" />
          <path d="M6.500 7h4.500l-4.500 5H11" fill="none" stroke="#202020" strokeWidth="1.500" />
          <path d="M11.500 0h7v8h-4z" fill="#202122" />
          <path d="M13 1.500h4.500L13 6.500h4.500" fill="none" stroke="#fff" strokeWidth="1.500" />
        </Pic>
      </Slot>
      <Slot className="mr-[25px] ml-[16px] w-[30px]">
        <CopilotLogo pre />
      </Slot>
    </div>
  );
}

export default function App() {
  return (
    <div className="flex h-[1200px] w-[1920px] flex-col overflow-hidden bg-[#3b3b3b] font-['Open_Sans','Noto_Sans',sans-serif]">
      <TitleBar />
      <div className="flex h-[1100px] shrink-0">
        <div className="flex w-[1865px] flex-col">
          <Toolbar />
          <BookmarksBar />
          <div className="ml-[5px] flex h-[1005px] overflow-hidden rounded-[10px]">
            <ChatPage />
            <Scrollbar />
          </div>
        </div>
        <Sidebar />
      </div>
      <Taskbar />
    </div>
  );
}
